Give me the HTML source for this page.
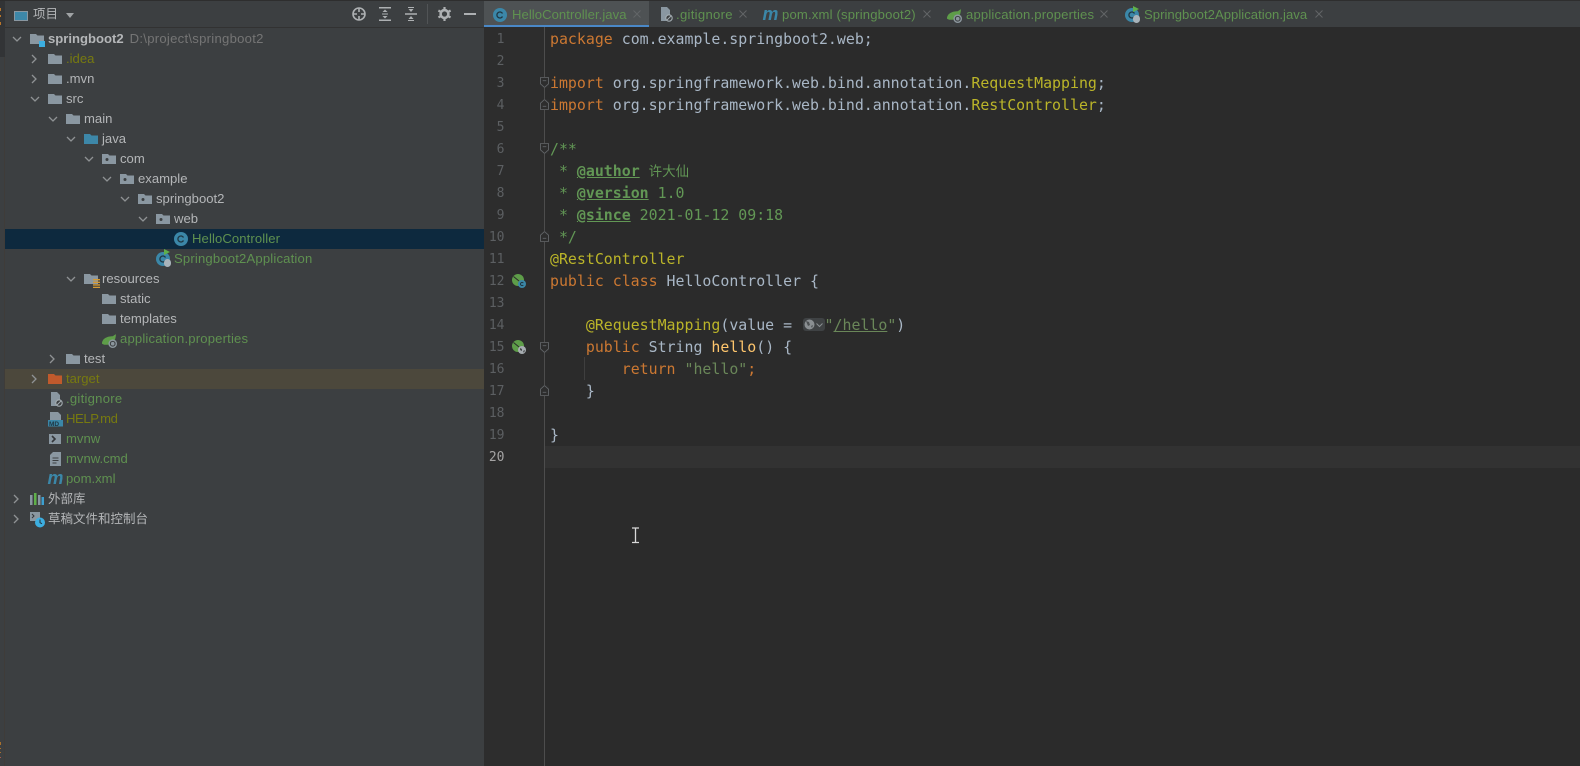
<!DOCTYPE html>
<html><head><meta charset="utf-8"><title>springboot2</title>
<style>
html,body{margin:0;padding:0;background:#3c3f41}
#r{position:relative;width:1580px;height:766px;overflow:hidden;background:#3c3f41;font-family:"Liberation Sans","Noto Sans CJK SC",sans-serif;font-size:13px;color:#b4b6b8;filter:blur(.3px)}
#r>*{position:absolute}
.t{height:20px;line-height:20px;white-space:nowrap;font-size:13.1px}
.g{color:#5f9150;letter-spacing:.17px}.o{color:#777a10}
svg{position:absolute;overflow:visible}
.c{position:absolute;left:550px;height:22px;line-height:22px;white-space:pre;font-family:"DejaVu Sans Mono","Noto Sans CJK SC",monospace;font-size:14.9px;color:#a9b7c6}
.k{color:#cc7832}.a{color:#bbb529}.d{color:#629755}.b{font-weight:bold;text-decoration:underline}.s{color:#6a8759}.f{color:#ffc66d}
.n{position:absolute;width:24.5px;left:480px;margin-top:1px;text-align:right;height:22px;line-height:22px;color:#5c5f62;font-family:"DejaVu Sans Mono",monospace;font-size:13px}
</style></head><body><div id="r">
<svg width="0" height="0" style="position:absolute"><defs>
<symbol id="fo" viewBox="0 0 14 14"><path d="M0 2h6l1.500 1.500H14V12H0z" fill="#8a97a1"/></symbol>
<symbol id="pk" viewBox="0 0 14 14"><path d="M0 2h6l1.500 1.500H14V12H0z" fill="#8a97a1"/><circle cx="5" cy="7.500" r="1.500" fill="#3c3f41"/></symbol>
<symbol id="cd" viewBox="0 0 10 6"><path d="M1 1l4 4 4-4" fill="none" stroke="#8f9294" stroke-width="1.300"/></symbol>
<symbol id="cr" viewBox="0 0 6 10"><path d="M1 1l4 4-4 4" fill="none" stroke="#8f9294" stroke-width="1.300"/></symbol>
<symbol id="cl" viewBox="0 0 14 14"><circle cx="7" cy="7" r="7" fill="#3b87a8"/><path d="M9.500 5.500A3 3 0 1 0 9.500 8.500" fill="none" stroke="#1f3642" stroke-width="1.300"/></symbol>
<symbol id="sp" viewBox="0 0 14 14"><path d="M0 10C0 5 5 3 10 3l3-2c0 6-3 10-8 10H2z" fill="#5e9d49"/><circle cx="10" cy="10" r="4" fill="#8c979e"/><circle cx="10" cy="10" r="2.200" fill="none" stroke="#3c3f41"/></symbol>
<symbol id="x" viewBox="0 0 8 8"><path d="M.5.500l7 7M7.500.500l-7 7" stroke="#626567" stroke-width="1"/></symbol>
<symbol id="m" viewBox="0 0 15 14"><text x="0" y="12" font-family="Liberation Sans,sans-serif" font-style="italic" font-weight="bold" font-size="18" fill="#3b87a8">m</text></symbol>
<symbol id="gi" viewBox="0 0 14 15"><path d="M2 0h6l3 3v5H7.500v6H2z" fill="#8a97a1"/><circle cx="10" cy="11" r="3.200" fill="#3c3f41" stroke="#a4adb2" stroke-width="1.100"/><path d="M8 13l4-4" stroke="#a4adb2"/></symbol>
<symbol id="fd" viewBox="0 0 10 12"><path d="M.5.500h9v7L5 11.500.5 7.500zM3 4h4" fill="none" stroke="#626568"/></symbol>
<symbol id="fu" viewBox="0 0 10 12"><path d="M5 .500l4.500 4v7h-9v-7zM3 8h4" fill="none" stroke="#626568"/></symbol>
</defs></svg>

<!-- left strip -->
<div style="left:0;top:0;width:5px;height:57px;background:#323436"></div>
<div style="left:4px;top:57px;width:1px;height:709px;background:#3f3c39"></div>
<div style="left:0;top:8px;width:1px;height:3px;background:#b8752a"></div>
<div style="left:0;top:15px;width:1px;height:2px;background:#b8752a"></div>
<div style="left:0;top:22px;width:1px;height:3px;background:#b8752a"></div>
<div style="left:0;top:742px;width:1px;height:3px;background:#a8702c"></div>
<div style="left:0;top:748px;width:1px;height:1px;background:#a8702c"></div>
<div style="left:0;top:752px;width:1px;height:1px;background:#a8702c"></div>
<div style="left:0;top:757px;width:1px;height:1px;background:#a85c4c"></div>

<!-- header -->
<div style="left:0;top:0;width:1580px;height:1px;background:#2e2e2e"></div>
<div style="left:5px;top:27px;width:479px;height:1px;background:#323232"></div>
<div style="left:14px;top:11px;width:11.5px;height:8px;background:#3d87a8;border:1px solid #8a97a1;border-top-width:1.500px"></div>
<div class="t" style="left:33px;top:4px;font-size:12.500px">项目</div>
<svg style="left:66px;top:13px" width="8" height="5"><path d="M0 0h8L4 5z" fill="#a0a3a5"/></svg>
<svg style="left:352px;top:7px" width="14" height="14" fill="none" stroke="#adb0b2" stroke-width="1.600"><circle cx="7" cy="7" r="6"/><path d="M7 1v4M7 9v4M1 7h4M9 7h4"/></svg>
<svg style="left:379px;top:7px" width="12" height="14" fill="#adb0b2"><path d="M0 0h12v1.500H0zM0 12.500h12V14H0zM6 2.500l2.500 2.500h-5zM6 11.500L3.500 9h5zM3 6.500h6v1H3z"/></svg>
<svg style="left:405px;top:7px" width="12" height="14" fill="#adb0b2"><path d="M0 6.300h12v1.400H0zM6 5L3.500 2h5zM6 9l2.500 3h-5z"/><path d="M3 0h6v1H3zM3 13h6v1H3z"/></svg>
<div style="left:427px;top:4px;width:1px;height:20px;background:#515456"></div>
<svg style="left:438px;top:7px" width="13" height="14"><circle cx="6.500" cy="7" r="3.900" fill="none" stroke="#adb0b2" stroke-width="2.600"/><path d="M6.500 0v14M.4 3.500l12.200 7M12.600 3.500l-12.200 7" stroke="#adb0b2" stroke-width="2.200" stroke-dasharray="2.400 9.200"/></svg>
<div style="left:464px;top:13px;width:12px;height:2px;background:#adb0b2"></div>

<!-- tree -->
<div style="left:5px;top:229px;width:479px;height:20px;background:#0d293e"></div>
<div style="left:5px;top:369px;width:479px;height:20px;background:#4c483c"></div>

<svg style="left:12px;top:36px" width="10" height="6"><use href="#cd"/></svg>
<svg style="left:30px;top:32px" width="14" height="14"><use href="#fo"/></svg>
<div style="left:39px;top:41px;width:6px;height:6px;background:#3caee0"></div>
<div class="t" style="left:48px;top:29px"><b>springboot2</b><span style="color:#757575;margin-left:6px;letter-spacing:.27px">D:\project\springboot2</span></div>

<svg style="left:31px;top:54px" width="6" height="10"><use href="#cr"/></svg>
<svg style="left:48px;top:52px" width="14" height="14"><use href="#fo"/></svg>
<div class="t o" style="left:66px;top:49px">.idea</div>

<svg style="left:31px;top:74px" width="6" height="10"><use href="#cr"/></svg>
<svg style="left:48px;top:72px" width="14" height="14"><use href="#fo"/></svg>
<div class="t" style="left:66px;top:69px">.mvn</div>

<svg style="left:30px;top:96px" width="10" height="6"><use href="#cd"/></svg>
<svg style="left:48px;top:92px" width="14" height="14"><use href="#fo"/></svg>
<div class="t" style="left:66px;top:89px">src</div>

<svg style="left:48px;top:116px" width="10" height="6"><use href="#cd"/></svg>
<svg style="left:66px;top:112px" width="14" height="14"><use href="#fo"/></svg>
<div class="t" style="left:84px;top:109px">main</div>

<svg style="left:66px;top:136px" width="10" height="6"><use href="#cd"/></svg>
<svg style="left:84px;top:132px" width="14" height="14" viewBox="0 0 14 14"><path d="M0 2h6l1.500 1.500H14V12H0z" fill="#3d87a8"/></svg>
<div class="t" style="left:102px;top:129px">java</div>

<svg style="left:84px;top:156px" width="10" height="6"><use href="#cd"/></svg>
<svg style="left:102px;top:152px" width="14" height="14"><use href="#pk"/></svg>
<div class="t" style="left:120px;top:149px">com</div>

<svg style="left:102px;top:176px" width="10" height="6"><use href="#cd"/></svg>
<svg style="left:120px;top:172px" width="14" height="14"><use href="#pk"/></svg>
<div class="t" style="left:138px;top:169px">example</div>

<svg style="left:120px;top:196px" width="10" height="6"><use href="#cd"/></svg>
<svg style="left:138px;top:192px" width="14" height="14"><use href="#pk"/></svg>
<div class="t" style="left:156px;top:189px">springboot2</div>

<svg style="left:138px;top:216px" width="10" height="6"><use href="#cd"/></svg>
<svg style="left:156px;top:212px" width="14" height="14"><use href="#pk"/></svg>
<div class="t" style="left:174px;top:209px">web</div>

<svg style="left:174px;top:232px" width="14" height="14"><use href="#cl"/></svg>
<div class="t g" style="left:192px;top:229px;letter-spacing:.1px">HelloController</div>

<svg style="left:156px;top:252px" width="14" height="14"><use href="#cl"/></svg>
<svg style="left:164px;top:249px" width="6" height="6"><path d="M0 0l6 3-6 3z" fill="#5fb04a"/></svg>
<div style="left:164px;top:259px;width:7px;height:8px;border-radius:4px;background:#a8b3ba"></div>
<div class="t g" style="left:174px;top:249px">Springboot2Application</div>

<svg style="left:66px;top:276px" width="10" height="6"><use href="#cd"/></svg>
<svg style="left:84px;top:272px" width="14" height="14"><use href="#fo"/></svg>
<svg style="left:93px;top:279px" width="7" height="9"><path d="M0 0h7v1.400H0zM0 2.600h7V4H0zM0 5.200h7v1.400H0zM0 7.800h7V9H0z" fill="#d49a34"/></svg>
<div class="t" style="left:102px;top:269px">resources</div>

<svg style="left:102px;top:292px" width="14" height="14"><use href="#fo"/></svg>
<div class="t" style="left:120px;top:289px">static</div>
<svg style="left:102px;top:312px" width="14" height="14"><use href="#fo"/></svg>
<div class="t" style="left:120px;top:309px">templates</div>
<svg style="left:102px;top:333px" width="15" height="15"><use href="#sp"/></svg>
<div class="t g" style="left:120px;top:329px">application.properties</div>

<svg style="left:49px;top:354px" width="6" height="10"><use href="#cr"/></svg>
<svg style="left:66px;top:352px" width="14" height="14"><use href="#fo"/></svg>
<div class="t" style="left:84px;top:349px">test</div>

<svg style="left:31px;top:374px" width="6" height="10"><use href="#cr"/></svg>
<svg style="left:48px;top:372px" width="14" height="14" viewBox="0 0 14 14"><path d="M0 2h6l1.500 1.500H14V12H0z" fill="#c05a2c"/></svg>
<div class="t o" style="left:66px;top:369px">target</div>

<svg style="left:49px;top:392px" width="14" height="15"><use href="#gi"/></svg>
<div class="t g" style="left:66px;top:389px;letter-spacing:.25px">.gitignore</div>

<svg style="left:48px;top:412px" width="15" height="15" viewBox="0 0 15 15"><path d="M2 0h8l3 3v5H2z" fill="#8a97a1"/><rect x="0" y="8" width="15" height="6.500" fill="#3b87a8"/><text x="1" y="14" font-family="Liberation Sans,sans-serif" font-size="6.500" font-weight="bold" fill="#1f3642">MD</text></svg>
<div class="t o" style="left:66px;top:409px;letter-spacing:-.4px">HELP.md</div>

<svg style="left:49px;top:434px" width="12" height="10"><rect width="12" height="10" fill="#8a97a1"/><path d="M3 2l3 3-3 3" fill="none" stroke="#33363a" stroke-width="1.600"/></svg>
<div class="t g" style="left:66px;top:429px;letter-spacing:0">mvnw</div>

<svg style="left:50px;top:452px" width="11" height="14"><path d="M3 0h8v14H0V3z" fill="#8a97a1"/><path d="M2.500 6h6M2.500 8.500h6M2.500 11h4" stroke="#3c3f41"/></svg>
<div class="t g" style="left:66px;top:449px;letter-spacing:0">mvnw.cmd</div>

<svg style="left:47px;top:472px" width="16" height="14" viewBox="0 0 15 14"><use href="#m"/></svg>
<div class="t g" style="left:66px;top:469px;letter-spacing:0">pom.xml</div>

<svg style="left:13px;top:494px" width="6" height="10"><use href="#cr"/></svg>
<svg style="left:30px;top:492px" width="14" height="14"><path d="M0 3h2.500v10H0z" fill="#8a97a1"/><path d="M4 1h2.500v12H4z" fill="#5fb04a"/><path d="M8 3h2.500v10H8z" fill="#8a97a1"/><path d="M11.500 5H14v8h-2.500z" fill="#3d9fd0"/></svg>
<div class="t" style="left:48px;top:489px;font-size:12.500px">外部库</div>

<svg style="left:13px;top:514px" width="6" height="10"><use href="#cr"/></svg>
<svg style="left:30px;top:512px" width="15" height="16"><rect width="10" height="9" fill="#8a97a1"/><path d="M2 2l2 2-2 2" fill="none" stroke="#33363a"/><circle cx="10" cy="10.500" r="5" fill="#3caee0"/><path d="M10 7.500v3.200l2 1" fill="none" stroke="#22303a"/></svg>
<div class="t" style="left:48px;top:509px;font-size:12.500px">草稿文件和控制台</div>

<!-- tabs -->
<div style="left:484px;top:1px;width:165px;height:24px;background:#4e5254"></div>
<div style="left:484px;top:25px;width:165px;height:2px;background:#4a88c7"></div>

<svg style="left:493px;top:8px" width="14" height="14"><use href="#cl"/></svg>
<div class="t g" style="left:512px;top:5px;letter-spacing:.05px">HelloController.java</div>
<svg style="left:633px;top:10px" width="8" height="8"><use href="#x"/></svg>

<svg style="left:659px;top:7px" width="14" height="15"><use href="#gi"/></svg>
<div class="t g" style="left:676px;top:5px;letter-spacing:.3px">.gitignore</div>
<svg style="left:739px;top:10px" width="8" height="8"><use href="#x"/></svg>

<svg style="left:762px;top:8px" width="16" height="14" viewBox="0 0 15 14"><use href="#m"/></svg>
<div class="t g" style="left:782px;top:5px">pom.xml (springboot2)</div>
<svg style="left:923px;top:10px" width="8" height="8"><use href="#x"/></svg>

<svg style="left:947px;top:8px" width="15" height="15"><use href="#sp"/></svg>
<div class="t g" style="left:966px;top:5px">application.properties</div>
<svg style="left:1100px;top:10px" width="8" height="8"><use href="#x"/></svg>

<svg style="left:1125px;top:8px" width="14" height="14"><use href="#cl"/></svg>
<svg style="left:1133px;top:6px" width="6" height="6"><path d="M0 0l6 3-6 3z" fill="#5fb04a"/></svg>
<div style="left:1133px;top:15px;width:7px;height:8px;border-radius:4px;background:#a8b3ba"></div>
<div class="t g" style="left:1144px;top:5px;letter-spacing:.03px">Springboot2Application.java</div>
<svg style="left:1315px;top:10px" width="8" height="8"><use href="#x"/></svg>

<!-- editor -->
<div style="left:484px;top:27px;width:1096px;height:739px;background:#2b2b2b"></div>
<div style="left:484px;top:27px;width:60px;height:739px;background:#2d2d2d"></div>
<div style="left:545px;top:446px;width:1035px;height:22px;background:#323232"></div>
<div style="left:544px;top:27px;width:1px;height:739px;background:#4d4d4d"></div>
<div style="left:584px;top:357px;width:1px;height:23px;background:#3f3f3f"></div>

<div style="left:0;top:0">
<div class="n" style="top:28px">1</div><div class="n" style="top:50px">2</div><div class="n" style="top:72px">3</div><div class="n" style="top:94px">4</div><div class="n" style="top:116px">5</div><div class="n" style="top:138px">6</div><div class="n" style="top:160px">7</div><div class="n" style="top:182px">8</div><div class="n" style="top:204px">9</div><div class="n" style="top:226px">10</div><div class="n" style="top:248px">11</div><div class="n" style="top:270px">12</div><div class="n" style="top:292px">13</div><div class="n" style="top:314px">14</div><div class="n" style="top:336px">15</div><div class="n" style="top:358px">16</div><div class="n" style="top:380px">17</div><div class="n" style="top:402px">18</div><div class="n" style="top:424px">19</div><div class="n" style="top:446px;color:#a4a3a3">20</div>
</div>

<svg style="left:512px;top:274px" width="14" height="14" viewBox="0 0 14 14"><circle cx="6" cy="6" r="6" fill="#5e9d49"/><path d="M1.500 2.500L7 7" stroke="#2b2b2b" stroke-width="1"/><circle cx="10" cy="10" r="4" fill="#3b87a8"/><path d="M11.300 9a1.600 1.600 0 1 0 0 2" fill="none" stroke="#1f3642"/></svg>
<svg style="left:512px;top:340px" width="14" height="14" viewBox="0 0 14 14"><circle cx="6" cy="6" r="6" fill="#5e9d49"/><path d="M1.500 2.500L7 7" stroke="#2b2b2b" stroke-width="1"/><circle cx="10" cy="10" r="4" fill="#a6acb0"/><path d="M8 8l2 1v2l-2-1zM11 11l2-1-1 3z" fill="#45484a"/></svg>

<svg style="left:540px;top:77px;background:#2d2d2d" width="9" height="11" viewBox="0 0 10 12"><use href="#fd"/></svg>
<svg style="left:540px;top:99px;background:#2d2d2d" width="9" height="11" viewBox="0 0 10 12"><use href="#fu"/></svg>
<svg style="left:540px;top:143px;background:#2d2d2d" width="9" height="11" viewBox="0 0 10 12"><use href="#fd"/></svg>
<svg style="left:540px;top:231px;background:#2d2d2d" width="9" height="11" viewBox="0 0 10 12"><use href="#fu"/></svg>
<svg style="left:540px;top:342px;background:#2d2d2d" width="9" height="11" viewBox="0 0 10 12"><use href="#fd"/></svg>
<svg style="left:540px;top:385px;background:#2d2d2d" width="9" height="11" viewBox="0 0 10 12"><use href="#fu"/></svg>

<div class="c" style="top:28px"><span class="k">package</span> com.example.springboot2.web;</div>
<div class="c" style="top:72px"><span class="k">import</span> org.springframework.web.bind.annotation.<span class="a">RequestMapping</span>;</div>
<div class="c" style="top:94px"><span class="k">import</span> org.springframework.web.bind.annotation.<span class="a">RestController</span>;</div>
<div class="c d" style="top:138px">/**</div>
<div class="c d" style="top:160px"> * <span class="b">@author</span> <span style="font-size:13.500px">许大仙</span></div>
<div class="c d" style="top:182px"> * <span class="b">@version</span> 1.0</div>
<div class="c d" style="top:204px"> * <span class="b">@since</span> 2021-01-12 09:18</div>
<div class="c d" style="top:226px"> */</div>
<div class="c a" style="top:248px">@RestController</div>
<div class="c" style="top:270px"><span class="k">public class</span> HelloController {</div>
<div class="c" style="top:314px">    <span class="a">@RequestMapping</span>(value = <span style="display:inline-block;width:23.500px"></span><span class="s">"<span style="text-decoration:underline">/hello</span>"</span>)</div>
<div style="left:803px;top:318px;width:22px;height:13px;border-radius:3px;background:#3f4244"></div>
<svg style="left:804px;top:319px" width="11" height="11"><circle cx="5.500" cy="5.500" r="5" fill="#8a8f92"/><path d="M2 2l3 1 1 3-2 1zM7 7l2-1-1 3z" fill="#4c5052"/></svg>
<svg style="left:816px;top:323px" width="7" height="4"><path d="M.5.500l3 3 3-3" fill="none" stroke="#8a8f92"/></svg>
<div class="c" style="top:336px">    <span class="k">public</span> String <span class="f">hello</span>() {</div>
<div class="c" style="top:358px">        <span class="k">return</span> <span class="s">"hello"</span><span class="k">;</span></div>
<div class="c" style="top:380px">    }</div>
<div class="c" style="top:424px">}</div>

<!-- I-beam -->
<svg style="left:632px;top:527px" width="8" height="17"><path d="M0 1h7M0 15.500h7M3.500 1v14.500" stroke="#d8d8d8" stroke-width="1.300" fill="none"/></svg>
</div></body></html>
